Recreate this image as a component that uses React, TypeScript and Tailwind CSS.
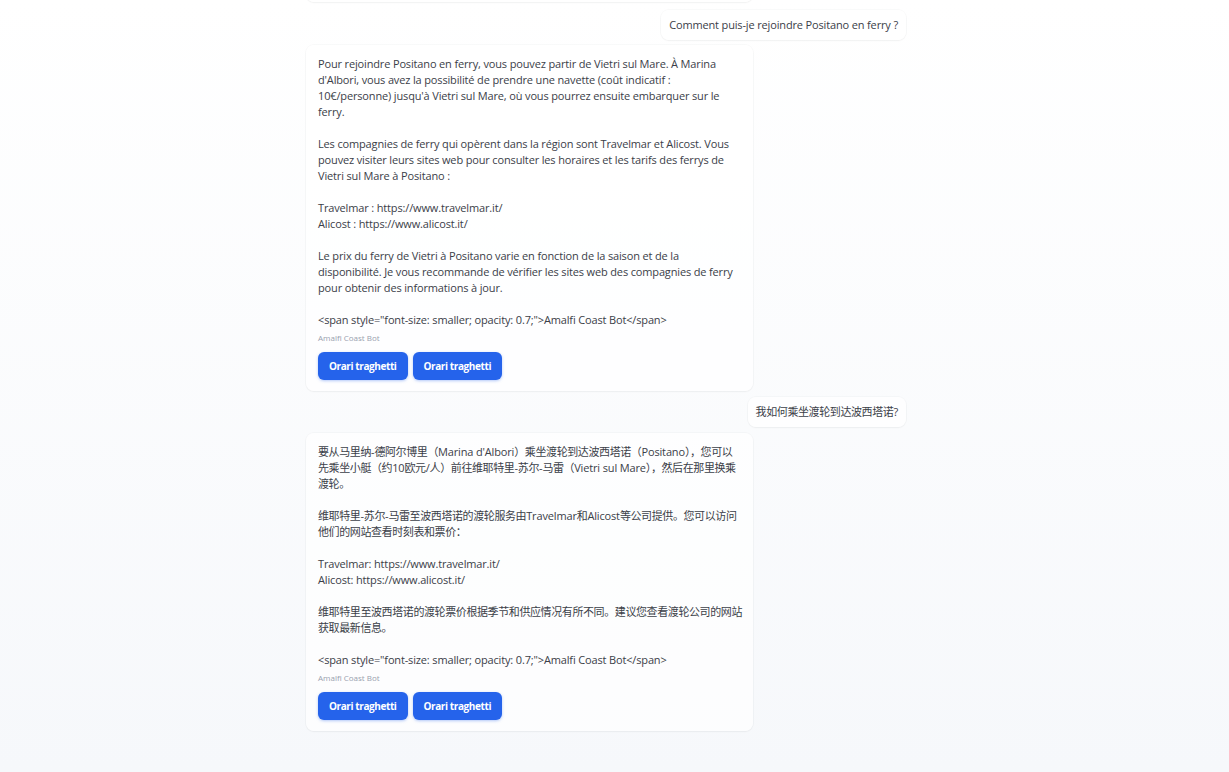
const frLines = [
  'Pour rejoindre Positano en ferry, vous pouvez partir de Vietri sul Mare. À Marina',
  "d'Albori, vous avez la possibilité de prendre une navette (coût indicatif :",
  "10€/personne) jusqu'à Vietri sul Mare, où vous pourrez ensuite embarquer sur le",
  'ferry.',
  '',
  'Les compagnies de ferry qui opèrent dans la région sont Travelmar et Alicost. Vous',
  'pouvez visiter leurs sites web pour consulter les horaires et les tarifs des ferrys de',
  'Vietri sul Mare à Positano :',
  '',
  'Travelmar : https://www.travelmar.it/',
  'Alicost : https://www.alicost.it/',
  '',
  'Le prix du ferry de Vietri à Positano varie en fonction de la saison et de la',
  'disponibilité. Je vous recommande de vérifier les sites web des compagnies de ferry',
  'pour obtenir des informations à jour.',
  '',
  '<span style="font-size: smaller; opacity: 0.7;">Amalfi Coast Bot</span>',
]

const zhLines = [
  "要从马里纳-德阿尔博里（Marina d'Albori）乘坐渡轮到达波西塔诺（Positano），您可以",
  '先乘坐小艇（约10欧元/人）前往维耶特里-苏尔-马雷（Vietri sul Mare），然后在那里换乘',
  '渡轮。',
  '',
  '维耶特里-苏尔-马雷至波西塔诺的渡轮服务由Travelmar和Alicost等公司提供。您可以访问',
  '他们的网站查看时刻表和票价：',
  '',
  'Travelmar: https://www.travelmar.it/',
  'Alicost: https://www.alicost.it/',
  '',
  '维耶特里至波西塔诺的渡轮票价根据季节和供应情况有所不同。建议您查看渡轮公司的网站',
  '获取最新信息。',
  '',
  '<span style="font-size: smaller; opacity: 0.7;">Amalfi Coast Bot</span>',
]

const bubble =
  'rounded-lg bg-white/70 shadow-[0_0_0_1px_rgba(15,23,42,0.025),0_1px_2px_rgba(15,23,42,0.035)]'

// CJK glyphs sit a bit tighter than the latin text around them
const Line = ({ text }: { text: string }) => (
  <>
    {text.split(/([\u3000-\u9fff\uff00-\uffef]+)/).map((part, i) =>
      i % 2 === 1 ? (
        <span key={i} className="tracking-[-0.4px]">
          {part}
        </span>
      ) : (
        part
      )
    )}
  </>
)

const UserMessage = ({ text }: { text: string }) => (
  <div className="flex justify-end">
    <div className={`${bubble} px-2 py-[7px] text-[11px] leading-4 tracking-[-0.15px] text-[#3b4048]`}>
      <Line text={text} />
    </div>
  </div>
)

const OrariButton = () => (
  <button className="h-7 rounded-md bg-[#2563eb] px-[11px] text-[10px] font-bold tracking-[-0.4px] text-white shadow-[0_1px_3px_rgba(37,99,235,0.35)]">
    Orari traghetti
  </button>
)

const BotMessage = ({ lines }: { lines: string[] }) => (
  <div className="flex justify-start">
    <div className={`${bubble} w-[447px] px-3 pt-[11px] pb-[11px]`}>
      <div className="text-[11px] leading-4 tracking-[-0.15px] text-[#3b4048]">
        {lines.map((line, i) => (
          <div key={i} className="h-4 whitespace-pre">
            <Line text={line} />
          </div>
        ))}
      </div>
      <div className="mt-[5px] text-[8px] leading-[10px] text-gray-400">Amalfi Coast Bot</div>
      <div className="mt-[9px] flex gap-[5px]">
        <OrariButton />
        <OrariButton />
      </div>
    </div>
  </div>
)

export default function App() {
  return (
    <div
      className="h-[772px] overflow-hidden bg-gradient-to-b from-white to-[#f6f8fb] pr-[17px]"
      style={{ fontFamily: '"Open Sans", "Noto Sans CJK SC", sans-serif' }}
    >
      <div className="mx-auto flex w-[600px] flex-col gap-[5px]">
        <div className="flex justify-start">
          <div className={`${bubble} -mt-2 h-[10px] w-[447px] rounded-t-none`} />
        </div>
        <div className="mt-[3px]">
          <UserMessage text="Comment puis-je rejoindre Positano en ferry ?" />
        </div>
        <BotMessage lines={frLines} />
        <div className="mt-[1px]">
          <UserMessage text="我如何乘坐渡轮到达波西塔诺?" />
        </div>
        <div className="mt-[1px]">
          <BotMessage lines={zhLines} />
        </div>
      </div>
    </div>
  )
}
